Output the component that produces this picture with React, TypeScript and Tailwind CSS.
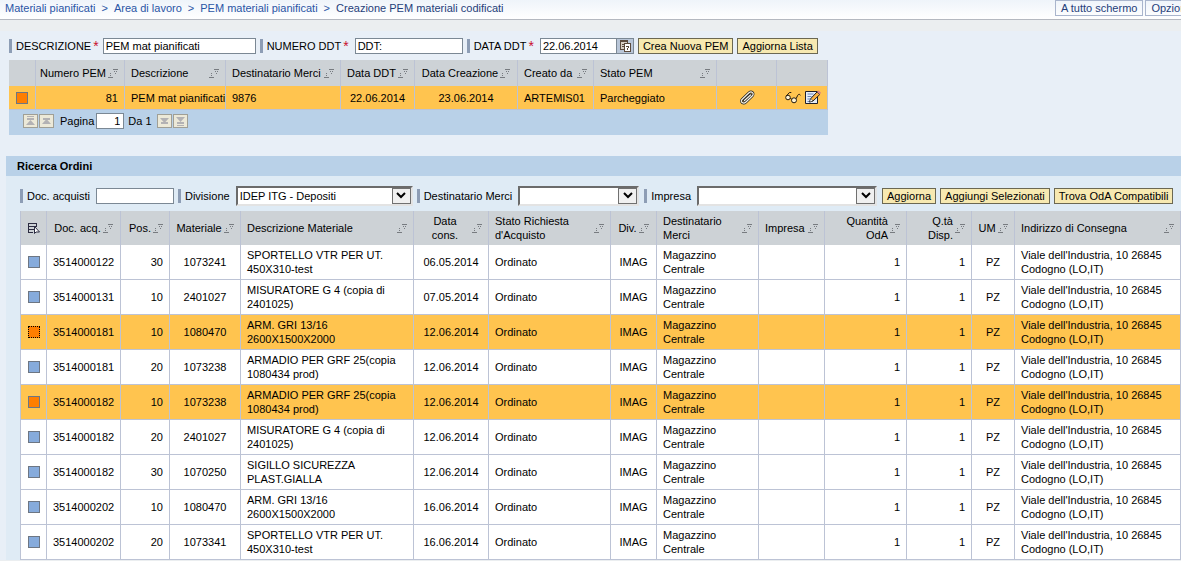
import type { ReactNode } from "react";

type Align = "left" | "center" | "right";

type Column = {
  label: string;
  width: string;
  align: Align;
  spread?: boolean;
};

type OrderRow = {
  doc: string;
  pos: string;
  material: string;
  description: string[];
  date: string;
  selected?: boolean;
  focused?: boolean;
};

const pemColumns: Column[] = [
  { label: "Numero PEM", width: "w-[89px]", align: "right" },
  { label: "Descrizione", width: "w-[101px]", align: "left", spread: true },
  { label: "Destinatario Merci", width: "w-[115px]", align: "left", spread: true },
  { label: "Data DDT", width: "w-[74px]", align: "center" },
  { label: "Data Creazione", width: "w-[103px]", align: "center" },
  { label: "Creato da", width: "w-[76px]", align: "left", spread: true },
  { label: "Stato PEM", width: "w-[123px]", align: "left", spread: true },
];

const orderColumns: Column[] = [
  { label: "Doc. acq.", width: "w-[74px]", align: "center" },
  { label: "Pos.", width: "w-[49px]", align: "right" },
  { label: "Materiale", width: "w-[71px]", align: "center" },
  { label: "Descrizione Materiale", width: "w-[173px]", align: "left", spread: true },
  { label: "Data\ncons.", width: "w-[75px]", align: "center", spread: true },
  { label: "Stato Richiesta\nd'Acquisto", width: "w-[122px]", align: "left", spread: true },
  { label: "Div.", width: "w-[46px]", align: "center" },
  { label: "Destinatario\nMerci", width: "w-[102px]", align: "left", spread: true },
  { label: "Impresa", width: "w-[66px]", align: "left", spread: true },
  { label: "Quantità\nOdA", width: "w-[82px]", align: "right" },
  { label: "Q.tà\nDisp.", width: "w-[65px]", align: "right" },
  { label: "UM", width: "w-[43px]", align: "center" },
  { label: "Indirizzo di Consegna", width: "w-auto", align: "left", spread: true },
];

const orders: OrderRow[] = [
  { doc: "3514000122", pos: "30", material: "1073241", description: ["SPORTELLO VTR PER UT.", "450X310-test"], date: "06.05.2014" },
  { doc: "3514000131", pos: "10", material: "2401027", description: ["MISURATORE G 4 (copia di", "2401025)"], date: "07.05.2014" },
  { doc: "3514000181", pos: "10", material: "1080470", description: ["ARM. GRI 13/16", "2600X1500X2000"], date: "12.06.2014", selected: true, focused: true },
  { doc: "3514000181", pos: "20", material: "1073238", description: ["ARMADIO PER GRF 25(copia", "1080434 prod)"], date: "12.06.2014" },
  { doc: "3514000182", pos: "10", material: "1073238", description: ["ARMADIO PER GRF 25(copia", "1080434 prod)"], date: "12.06.2014", selected: true },
  { doc: "3514000182", pos: "20", material: "2401027", description: ["MISURATORE G 4 (copia di", "2401025)"], date: "12.06.2014" },
  { doc: "3514000182", pos: "30", material: "1070250", description: ["SIGILLO SICUREZZA", "PLAST.GIALLA"], date: "12.06.2014" },
  { doc: "3514000202", pos: "10", material: "1080470", description: ["ARM. GRI 13/16", "2600X1500X2000"], date: "16.06.2014" },
  { doc: "3514000202", pos: "20", material: "1073341", description: ["SPORTELLO VTR PER UT.", "450X310-test"], date: "16.06.2014" },
];

const alignText = { left: "text-left", center: "text-center", right: "text-right" };
const alignFlex = { left: "justify-start", center: "justify-center", right: "justify-end" };

function SortIcon() {
  return (
    <svg width="10" height="9" viewBox="0 0 10 9" className="shrink-0" shapeRendering="crispEdges" fill="#777b80" aria-hidden="true">
      <path d="M2 4h1v1h-1zM2 6h1v1h-1zM0 8h5v1h-5z" />
      <path d="M5 0h5v1h-5zM6 2h1v1h-1zM8 2h1v1h-1zM7 4h1v1h-1z" />
    </svg>
  );
}

function CalendarIcon() {
  return (
    <svg width="12" height="12" viewBox="0 0 12 12" shapeRendering="crispEdges" fill="none" stroke="#5b4a3c" aria-hidden="true">
      <path d="M1.500.5h7v9h-7z" fill="#d8cfc4" />
      <path d="M1 1.5h8M3 4.500h2M3 6.500h2" />
      <path d="M5.500 3.500h6v8h-6z" fill="#ffffff" />
      <path d="M7 6.500h3M9.500 6v2M8.500 8v2" />
    </svg>
  );
}

function SelectAllIcon() {
  return (
    <svg width="13" height="12" viewBox="0 0 13 12" fill="none" stroke="#2b2b40" aria-hidden="true">
      <path d="M.5 1h9.500M.5 4.500h9.500M.5 7.500h6M.5 10.500h5M1 .5v10M9.500 1v4" strokeWidth="1" shapeRendering="crispEdges" />
      <path d="M7.500 4.500v7l1.500-1.500h3.500z" fill="#ffffff" />
    </svg>
  );
}

function PaperclipIcon() {
  const wire = "M5.500 10.500 11.500 5M3 9.500 10 2.800c2.600-2.200 5.600.6 3.400 3L7 12c-2.700 2.600-6.300-.2-4-2.500";
  return (
    <svg width="16" height="15" viewBox="0 0 16 15" fill="none" strokeLinecap="round" strokeLinejoin="round" aria-hidden="true">
      <path d={wire} stroke="#222222" strokeWidth="2.600" />
      <path d={wire} stroke="#f7f3e6" strokeWidth="1.200" />
    </svg>
  );
}

function GlassesIcon() {
  return (
    <svg width="16" height="13" viewBox="0 0 16 13" fill="none" stroke="#241b10" aria-hidden="true">
      <circle cx="3" cy="6.500" r="2.300" fill="#fff4d4" />
      <circle cx="9" cy="9.300" r="2.500" fill="#fff4d4" />
      <path d="M5.200 7.300 6.800 8.200M1.200 5 4.500 1.500h1.800M11 7.800l1.800-3.600c.8-1.300 2-1.200 2.600.2" />
    </svg>
  );
}

function EditIcon() {
  return (
    <svg width="16" height="15" viewBox="0 0 16 15" aria-hidden="true">
      <path d="M.5 1.500h12v12h-12z" fill="#e6edf8" stroke="#1f1f2b" />
      <path d="M2.500 4h6M2.500 6.500h4M2.500 9h2.500M2.500 11.500h2" stroke="#6b84b5" />
      <path d="M4.500 12 5.800 8.500 12 2l2.800 2.500L8 11z" fill="#f9b040" stroke="#1f1f1f" />
      <path d="m4.500 12 1.300-3.500L8 11z" fill="#ffffff" stroke="#1f1f1f" strokeWidth="0.500" />
      <path d="M12 2 13.500.5 16 2.800 14.800 4.500z" fill="#d98080" />
    </svg>
  );
}

function PagerButton({ label, down, double }: { label: string; down?: boolean; double?: boolean }) {
  return (
    <button type="button" aria-label={label} className="flex h-[14px] w-[15px] items-center justify-center border border-[#a09f95] bg-[#ece9d8]">
      <svg width="9" height="10" viewBox="0 0 9 10" className={down ? "rotate-180" : ""} fill="#b3b2b4" aria-hidden="true">
        {double ? <path d="M1 0h7v1H1zM1 2h7v2H1zM4.500 4 9 9H0z" /> : <path d="M1 2h7v2H1zM4.500 3 9 8H0z" />}
      </svg>
    </button>
  );
}

function SapButton({ children }: { children: ReactNode }) {
  return (
    <button type="button" className="h-4 shrink-0 border border-[#6b6853] bg-[#f7e9b1] px-1 leading-[14px] whitespace-nowrap">
      {children}
    </button>
  );
}

function FieldLabel({ htmlFor, required, children }: { htmlFor: string; required?: boolean; children: ReactNode }) {
  return (
    <label htmlFor={htmlFor} className="flex h-[14px] shrink-0 items-center gap-0.5 border-l-3 border-[#8d9db5] pl-1 whitespace-nowrap">
      {children}
      {required ? <span className="text-sm leading-[14px] text-[#c8102e]">*</span> : null}
    </label>
  );
}

function DropDown({ id, width, value }: { id: string; width: string; value: string }) {
  return (
    <div className={`relative h-5 shrink-0 ${width}`}>
      <select
        id={id}
        defaultValue={value}
        className="h-full w-full appearance-none border-2 border-t-[#6b6b6b] border-r-[#e3e3e3] border-b-[#e3e3e3] border-l-[#6b6b6b] bg-white pr-5 pl-0.5"
      >
        <option>{value}</option>
      </select>
      <span className="pointer-events-none absolute top-0.5 right-0.5 flex h-4 w-[19px] items-center justify-center border border-[#707070] bg-[#f0f0f0]">
        <svg width="10" height="7" viewBox="0 0 10 7" fill="none" stroke="#000000" strokeWidth="2" aria-hidden="true">
          <path d="m1 1 4 4 4-4" />
        </svg>
      </span>
    </div>
  );
}

function RowMark({ label, selected, focused }: { label: string; selected?: boolean; focused?: boolean }) {
  const border = focused ? "border-dotted border-black" : "border-[#6d7683]";
  return (
    <button
      type="button"
      aria-label={label}
      aria-pressed={selected ?? false}
      className={`mx-auto block size-3 border ${border} ${selected ? "bg-[#ff7e00]" : "bg-[#86abdc]"}`}
    />
  );
}

function HeaderCell({ column }: { column: Column }) {
  return (
    <th scope="col" className={`${column.width} border-r border-[#bcc3d5] px-[6px] font-normal`}>
      <div className={`flex items-center gap-0.5 ${column.spread ? "justify-between" : alignFlex[column.align]}`}>
        <span className={`whitespace-pre ${column.spread && column.align === "center" ? "flex-1" : ""} ${alignText[column.align]}`}>
          {column.label}
        </span>
        <SortIcon />
      </div>
    </th>
  );
}

function Cell({ align = "left", children }: { align?: Align; children?: ReactNode }) {
  return <td className={`border-r border-b border-[#bcc3d5] px-[6px] whitespace-nowrap ${alignText[align]}`}>{children}</td>;
}

function Breadcrumb() {
  return (
    <header className="flex h-5 items-start overflow-hidden border-b border-[#b4b8c0] bg-linear-to-b from-[#eff4fa] to-white pl-[5px] text-[#2a55a5]">
      <nav aria-label="Percorso" className="flex flex-1 gap-1.5 leading-4 whitespace-nowrap">
        <a href="#materiali">Materiali pianificati</a>
        <span>&gt;</span>
        <a href="#area">Area di lavoro</a>
        <span>&gt;</span>
        <a href="#pem">PEM materiali pianificati</a>
        <span>&gt;</span>
        <span className="text-[#25407a]">Creazione PEM materiali codificati</span>
      </nav>
      <div className="flex w-[126px] shrink-0 gap-0.5 overflow-hidden text-[#25407a]">
        <button type="button" className="h-4 shrink-0 border border-[#a9b5cd] px-[5px] leading-[14px]">A tutto schermo</button>
        <button type="button" className="h-4 shrink-0 border border-[#a9b5cd] px-[5px] leading-[14px]">Opzioni</button>
      </div>
    </header>
  );
}

function PemSection() {
  return (
    <section className="ml-[9px]">
      <form className="flex h-[22px] items-start" onSubmit={(event) => event.preventDefault()}>
        <div className="flex items-center gap-1">
          <FieldLabel htmlFor="descrizione" required>DESCRIZIONE</FieldLabel>
          <input id="descrizione" defaultValue="PEM mat pianificati" className="h-4 w-[153px] border border-[#7b8894] bg-white px-0.5" />
        </div>
        <div className="ml-1 flex items-center gap-1.5">
          <FieldLabel htmlFor="numero" required>NUMERO DDT</FieldLabel>
          <input id="numero" defaultValue="DDT:" className="h-4 w-[108px] border border-[#7b8894] bg-white px-0.5" />
        </div>
        <div className="ml-1 flex items-center gap-1.5">
          <FieldLabel htmlFor="data" required>DATA DDT</FieldLabel>
          <div className="flex">
            <input id="data" defaultValue="22.06.2014" className="h-4 w-[77px] border border-[#7b8894] bg-white px-0.5" />
            <button type="button" aria-label="Calendario" className="flex h-4 w-[17px] items-center justify-center border border-l-0 border-[#7b8894] bg-[#b9c6d8]">
              <CalendarIcon />
            </button>
          </div>
        </div>
        <div className="ml-1 flex gap-1">
          <SapButton>Crea Nuova PEM</SapButton>
          <SapButton>Aggiorna Lista</SapButton>
        </div>
      </form>

      <div className="w-fit bg-[#b9d1e8]">
        <table className="w-[819px] table-fixed border-separate border-spacing-0">
          <thead className="bg-[#cdd2d6]">
            <tr className="h-[26px]">
              <th className="w-[27px] border-r border-[#bcc3d5]" />
              {pemColumns.map((column) => <HeaderCell key={column.label} column={column} />)}
              <th className="w-[60px] border-r border-[#bcc3d5]" />
              <th className="w-auto border-r border-[#bcc3d5]" />
            </tr>
          </thead>
          <tbody>
            <tr className="h-6 bg-[#ffc44f]">
              <td className="border-r border-b border-[#bcc3d5]"><RowMark label="Riga 81" selected /></td>
              <Cell align="right">81</Cell>
              <Cell>PEM mat pianificati</Cell>
              <Cell>9876</Cell>
              <Cell align="center">22.06.2014</Cell>
              <Cell align="center">23.06.2014</Cell>
              <Cell>ARTEMIS01</Cell>
              <Cell>Parcheggiato</Cell>
              <Cell>
                <a href="#allegati" aria-label="Allegati" className="flex justify-center"><PaperclipIcon /></a>
              </Cell>
              <Cell>
                <div className="flex items-center justify-end gap-1">
                  <a href="#visualizza" aria-label="Visualizza"><GlassesIcon /></a>
                  <a href="#modifica" aria-label="Modifica"><EditIcon /></a>
                </div>
              </Cell>
            </tr>
          </tbody>
        </table>
        <div className="flex h-[25px] items-center gap-px pb-1 pl-[14px]">
          <PagerButton label="Prima pagina" double />
          <PagerButton label="Pagina precedente" />
          <label htmlFor="pagina" className="pr-px pl-[5px]">Pagina</label>
          <input id="pagina" defaultValue="1" className="h-4 w-7 border border-[#7b8894] bg-white px-[3px] text-right" />
          <span className="pr-1 pl-[3px]">Da 1</span>
          <PagerButton label="Pagina successiva" down />
          <PagerButton label="Ultima pagina" down double />
        </div>
      </div>
    </section>
  );
}

function OrdersSection() {
  return (
    <section className="mt-[21px] ml-[6px] bg-[#dfebf5]">
      <h2 className="h-5 bg-[#b9d1e8] pl-[11px] leading-5 font-bold">Ricerca Ordini</h2>
      <div className="pl-[14px]">
        <form className="flex h-[35px] items-center pt-1" onSubmit={(event) => event.preventDefault()}>
          <div className="flex items-center gap-1.5">
            <FieldLabel htmlFor="doc">Doc. acquisti</FieldLabel>
            <input id="doc" className="h-4 w-[78px] border border-[#7b8894] bg-white px-0.5" />
          </div>
          <div className="ml-1 flex items-center gap-1.5">
            <FieldLabel htmlFor="divisione">Divisione</FieldLabel>
            <DropDown id="divisione" width="w-[177px]" value="IDEP ITG - Depositi" />
          </div>
          <div className="ml-1 flex items-center gap-1.5">
            <FieldLabel htmlFor="destinatario">Destinatario Merci</FieldLabel>
            <DropDown id="destinatario" width="w-[121px]" value="" />
          </div>
          <div className="ml-[5px] flex items-center gap-1.5">
            <FieldLabel htmlFor="impresa">Impresa</FieldLabel>
            <DropDown id="impresa" width="w-[180px]" value="" />
          </div>
          <div className="ml-[5px] flex gap-1">
            <SapButton>Aggiorna</SapButton>
            <SapButton>Aggiungi Selezionati</SapButton>
            <SapButton>Trova OdA Compatibili</SapButton>
          </div>
        </form>

        <table className="w-full table-fixed border-separate border-spacing-0 border-l border-[#bcc3d5]">
          <thead className="bg-[#cdd2d6]">
            <tr className="h-[34px]">
              <th className="w-[26px] border-r border-[#bcc3d5]">
                <button type="button" aria-label="Seleziona tutto" className="mx-auto block w-fit"><SelectAllIcon /></button>
              </th>
              {orderColumns.map((column) => <HeaderCell key={column.label} column={column} />)}
            </tr>
          </thead>
          <tbody>
            {orders.map((row) => (
              <tr key={`${row.doc}-${row.pos}`} className={`h-[35px] ${row.selected ? "bg-[#ffc44f]" : "bg-white"}`}>
                <td className="border-r border-b border-[#bcc3d5]">
                  <RowMark label={`Riga ${row.doc} ${row.pos}`} selected={row.selected} focused={row.focused} />
                </td>
                <Cell align="center">{row.doc}</Cell>
                <Cell align="right">{row.pos}</Cell>
                <Cell align="center">{row.material}</Cell>
                <Cell>{row.description[0]}<br />{row.description[1]}</Cell>
                <Cell align="center">{row.date}</Cell>
                <Cell>Ordinato</Cell>
                <Cell align="center">IMAG</Cell>
                <Cell>Magazzino<br />Centrale</Cell>
                <Cell />
                <Cell align="right">1</Cell>
                <Cell align="right">1</Cell>
                <Cell align="center">PZ</Cell>
                <Cell>Viale dell'Industria, 10 26845<br />Codogno (LO,IT)</Cell>
              </tr>
            ))}
          </tbody>
        </table>
      </div>
    </section>
  );
}

export default function App() {
  return (
    <div className="min-h-screen bg-[#ebeef0] font-['Liberation_Sans',Arial,sans-serif] text-[11px] leading-[14px] text-black">
      <Breadcrumb />
      <main className="mt-[11px] bg-[#e8eff7] pt-[7px]">
        <PemSection />
        <OrdersSection />
      </main>
    </div>
  );
}
